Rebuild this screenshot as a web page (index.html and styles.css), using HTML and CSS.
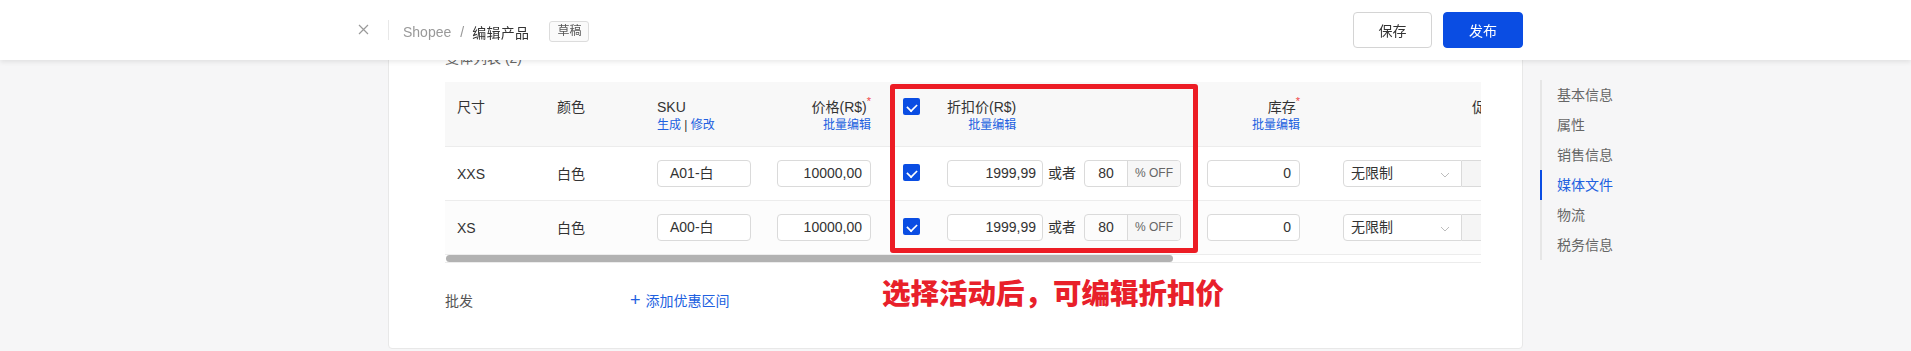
FILE: index.html
```html
<!DOCTYPE html>
<html lang="zh-CN">
<head>
<meta charset="utf-8">
<title>Shopee / 编辑产品</title>
<link rel="stylesheet" href="styles.css">
</head>
<body>
<header class="topbar">
  <div class="topbar-left">
    <button class="close-btn" aria-label="关闭">
      <svg width="11" height="11" viewBox="0 0 11 11"><path d="M1 1 L10 10 M10 1 L1 10" stroke="#9a9a9a" stroke-width="1.2" fill="none"/></svg>
    </button>
  </div>
  <div class="topbar-main">
    <span class="divider"></span>
    <span class="crumb-root">Shopee</span>
    <span class="crumb-sep">/</span>
    <span class="crumb-current">编辑产品</span>
    <span class="badge">草稿</span>
    <div class="actions">
      <button class="btn btn-default">保存</button>
      <button class="btn btn-primary">发布</button>
    </div>
  </div>
  <div></div>
</header>

<main class="layout">
  <div></div>
  <section class="card">
    <div class="card-title">变体列表 (2)</div>
    <div class="table-wrap">
      <div class="table">
        <div class="row row-head">
          <div class="cell">尺寸</div>
          <div class="cell">颜色</div>
          <div class="cell">
            <div>SKU</div>
            <div class="link">生成 <span class="bar">|</span> 修改</div>
          </div>
          <div class="cell cell-right">
            <div class="stack">
              <div>价格(R$)<sup class="req">*</sup></div>
              <div class="link">批量编辑</div>
            </div>
          </div>
          <div class="cell"><span class="checkbox"></span></div>
          <div class="cell">
            <div class="stack">
              <div>折扣价(R$)</div>
              <div class="link">批量编辑</div>
            </div>
          </div>
          <div class="cell cell-right">
            <div class="stack">
              <div>库存<sup class="req">*</sup></div>
              <div class="link">批量编辑</div>
            </div>
          </div>
          <div class="cell cell-promo">促销库存</div>
        </div>

        <div class="row row-body">
          <div class="cell">XXS</div>
          <div class="cell">白色</div>
          <div class="cell"><span class="input input-sku">A01-白</span></div>
          <div class="cell cell-right"><span class="input input-num">10000,00</span></div>
          <div class="cell"><span class="checkbox"></span></div>
          <div class="cell discount">
            <span class="input input-disc">1999,99</span>
            <span class="or">或者</span>
            <span class="pct"><span class="pct-val">80</span><span class="pct-unit">% OFF</span></span>
          </div>
          <div class="cell"><span class="input input-stock">0</span></div>
          <div class="cell cell-select">
            <span class="select">无限制<svg class="chev" width="10" height="6" viewBox="0 0 10 6"><path d="M1 1 L5 5 L9 1" stroke="#bdbdbd" stroke-width="1" fill="none"/></svg></span><span class="disabled-input"></span>
          </div>
        </div>

        <div class="row row-body row-alt">
          <div class="cell">XS</div>
          <div class="cell">白色</div>
          <div class="cell"><span class="input input-sku">A00-白</span></div>
          <div class="cell cell-right"><span class="input input-num">10000,00</span></div>
          <div class="cell"><span class="checkbox"></span></div>
          <div class="cell discount">
            <span class="input input-disc">1999,99</span>
            <span class="or">或者</span>
            <span class="pct"><span class="pct-val">80</span><span class="pct-unit">% OFF</span></span>
          </div>
          <div class="cell"><span class="input input-stock">0</span></div>
          <div class="cell cell-select">
            <span class="select">无限制<svg class="chev" width="10" height="6" viewBox="0 0 10 6"><path d="M1 1 L5 5 L9 1" stroke="#bdbdbd" stroke-width="1" fill="none"/></svg></span><span class="disabled-input"></span>
          </div>
        </div>
      </div>
      <div class="scroll-track"><div class="scroll-thumb"></div></div>
      <div class="highlight-box"></div>
    </div>

    <div class="wholesale">
      <span class="wholesale-label">批发</span>
      <span class="add-link"><span class="plus">+</span>添加优惠区间</span>
    </div>

    <div class="annotation">选择活动后，可编辑折扣价</div>
  </section>

  <nav class="sidenav">
    <div class="nav-item">基本信息</div>
    <div class="nav-item">属性</div>
    <div class="nav-item">销售信息</div>
    <div class="nav-item active">媒体文件</div>
    <div class="nav-item">物流</div>
    <div class="nav-item">税务信息</div>
  </nav>
</main>
</body>
</html>
```

FILE: styles.css
```css
* { box-sizing: border-box; margin: 0; padding: 0; }

html, body { overflow: hidden; }

body {
  background: #f6f6f7;
  font-family: "Liberation Sans", "Noto Sans CJK SC", sans-serif;
  font-size: 14px;
  color: #333;
  height: 351px;
}

/* ---------- top bar ---------- */
.topbar {
  position: fixed;
  top: 0; left: 0; right: 0;
  height: 60px;
  background: #fff;
  box-shadow: 0 2px 5px rgba(0, 0, 0, 0.09);
  display: grid;
  grid-template-columns: 1fr 1135px 1fr;
  z-index: 10;
}

.topbar-left {
  display: flex;
  align-items: center;
  justify-content: flex-end;
  padding-right: 19px;
}

.close-btn {
  border: 0;
  background: none;
  width: 11px;
  height: 11px;
  display: block;
  margin-top: -2px;
}
.close-btn svg { display: block; }

.topbar-main {
  display: flex;
  align-items: center;
  padding-top: 3px;
}

.divider {
  width: 1px;
  height: 20px;
  background: #e8e8e8;
  margin-right: 14px;
  margin-top: -3px;
}

.crumb-root { color: #999; line-height: 20px; }
.crumb-sep { color: #999; margin: 0 8px 0 9px; }
.crumb-current { color: #333; letter-spacing: 0.3px; }

.badge {
  margin-left: 20px;
  height: 21px;
  padding: 0 7px;
  font-size: 12px;
  line-height: 19px;
  border: 1px solid #dcdcdc;
  border-radius: 3px;
  background: #fafafa;
  color: #555;
}

.actions {
  margin-left: auto;
  display: flex;
  gap: 11px;
  margin-top: -3px;
}

.btn {
  width: 80px;
  height: 36px;
  border-radius: 4px;
  font-family: "Liberation Sans", "Noto Sans CJK SC", sans-serif;
  font-size: 14px;
}
.btn-default {
  width: 79px;
  background: #fff;
  border: 1px solid #d4d4d4;
  color: #333;
}
.btn-primary {
  background: #0a4de3;
  border: 1px solid #0a4de3;
  color: #fff;
}

/* ---------- layout ---------- */
.layout {
  display: grid;
  grid-template-columns: 1fr 1135px 1fr;
  padding-top: 24px;
  align-items: start;
}

.card {
  position: relative;
  background: #fff;
  border: 1px solid #e8e8e8;
  border-radius: 4px;
  padding: 23px 41px 37px 56px;
}

.card-title {
  line-height: 20px;
  color: #666;
  margin-bottom: 14px;
}

/* ---------- table ---------- */
.table-wrap {
  position: relative;
}

.table {
  overflow: hidden;
  background: linear-gradient(#f8f8f8 0 65px, #fff 65px);
}

.row {
  display: grid;
  grid-template-columns: 100px 100px 120px 126px 44px 260px 117px 300px;
  width: max-content;
  border-bottom: 1px solid #ececec;
}

.row-head {
  height: 65px;
  background: #f8f8f8;
  align-items: start;
  padding-top: 16px;
  line-height: 18px;
}

.row-body {
  height: 54px;
  align-items: center;
  background: #fff;
}
.row-alt { background: #fcfcfc; }

.cell {
  padding: 0 12px;
  line-height: 18px;
}

.cell-right {
  text-align: right;
  padding-right: 20px;
}
.row-head .cell-right:nth-child(7) { padding-right: 12px; }

.stack {
  display: inline-block;
  text-align: right;
}

.link {
  font-size: 12px;
  color: #2060e0;
  line-height: 18px;
}
.link .bar { color: #333; }

.req {
  color: #f04848;
  font-size: 11px;
  vertical-align: top;
  line-height: 10px;
  position: relative;
  top: -2px;
}

.cell-promo {
  padding-left: 160px;
}

.checkbox {
  display: block;
  width: 17px;
  height: 17px;
  border-radius: 2px;
  background: #0a4de3;
  position: relative;
}
.checkbox::after {
  content: "";
  position: absolute;
  left: 5px;
  top: 3px;
  width: 6px;
  height: 9px;
  border: solid #fff;
  border-width: 0 2px 2px 0;
  transform: rotate(45deg) scale(0.85);
}
.row-body .checkbox { margin-top: -2px; }

.input {
  display: inline-block;
  height: 27px;
  line-height: 25px;
  border: 1px solid #dadada;
  border-radius: 4px;
  background: #fff;
  color: #333;
  vertical-align: middle;
}
.input-sku { width: 94px; padding-left: 12px; text-align: left; }
.input-num { width: 94px; padding-right: 8px; text-align: right; }
.input-disc { width: 96px; padding-right: 6px; text-align: right; }
.input-stock { width: 93px; padding-right: 8px; text-align: right; }

.discount {
  display: flex;
  align-items: center;
}

.or {
  margin: 0 8px 0 5px;
  line-height: 27px;
}

.pct {
  display: flex;
  width: 97px;
  height: 27px;
  border: 1px solid #dadada;
  border-radius: 4px;
  overflow: hidden;
}
.pct-val {
  width: 42px;
  text-align: center;
  line-height: 25px;
}
.pct-unit {
  flex: 1;
  background: #f7f7f7;
  border-left: 1px solid #dadada;
  font-size: 12px;
  color: #666;
  text-align: center;
  line-height: 25px;
}

.cell-select {
  padding-left: 31px;
  display: flex;
}

.select {
  position: relative;
  width: 119px;
  height: 27px;
  line-height: 25px;
  border: 1px solid #dadada;
  border-radius: 4px 0 0 4px;
  padding-left: 7px;
  background: #fff;
}
.chev {
  position: absolute;
  right: 11px;
  top: 11px;
}

.disabled-input {
  width: 120px;
  height: 27px;
  background: #f5f5f5;
  border: 1px solid #dadada;
  border-left: 0;
}

.scroll-track {
  height: 8px;
  border-bottom: 1px solid #ececec;
  padding-left: 1px;
}
.scroll-thumb {
  width: 727px;
  height: 7px;
  border-radius: 4px;
  background: #b2b2b2;
}

.highlight-box {
  position: absolute;
  left: 445px;
  top: 2px;
  width: 308px;
  height: 169px;
  border: 5px solid #ec1c24;
  border-radius: 3px;
  pointer-events: none;
}

/* ---------- wholesale ---------- */
.wholesale {
  display: flex;
  align-items: center;
  margin-top: 27px;
  line-height: 20px;
}
.wholesale-label {
  width: 185px;
  color: #555;
}
.add-link {
  color: #2060e0;
}
.plus {
  font-size: 18px;
  margin-right: 5px;
  font-weight: 300;
}

.annotation {
  position: absolute;
  left: 493px;
  top: 251px;
  font-family: "Noto Sans CJK SC", sans-serif;
  font-size: 28.5px;
  line-height: 32px;
  font-weight: 900;
  color: #e8202a;
  white-space: nowrap;
}

/* ---------- side nav ---------- */
.sidenav {
  margin-top: 56px;
  margin-left: 17px;
  border-left: 2px solid #e6e6e6;
  width: 200px;
}
.nav-item {
  position: relative;
  height: 30px;
  line-height: 30px;
  padding-left: 15px;
  color: #666;
}
.nav-item.active {
  color: #2060e0;
}
.nav-item.active::before {
  content: "";
  position: absolute;
  left: -2px;
  top: 0;
  width: 2px;
  height: 30px;
  background: #0a4de3;
}
```
